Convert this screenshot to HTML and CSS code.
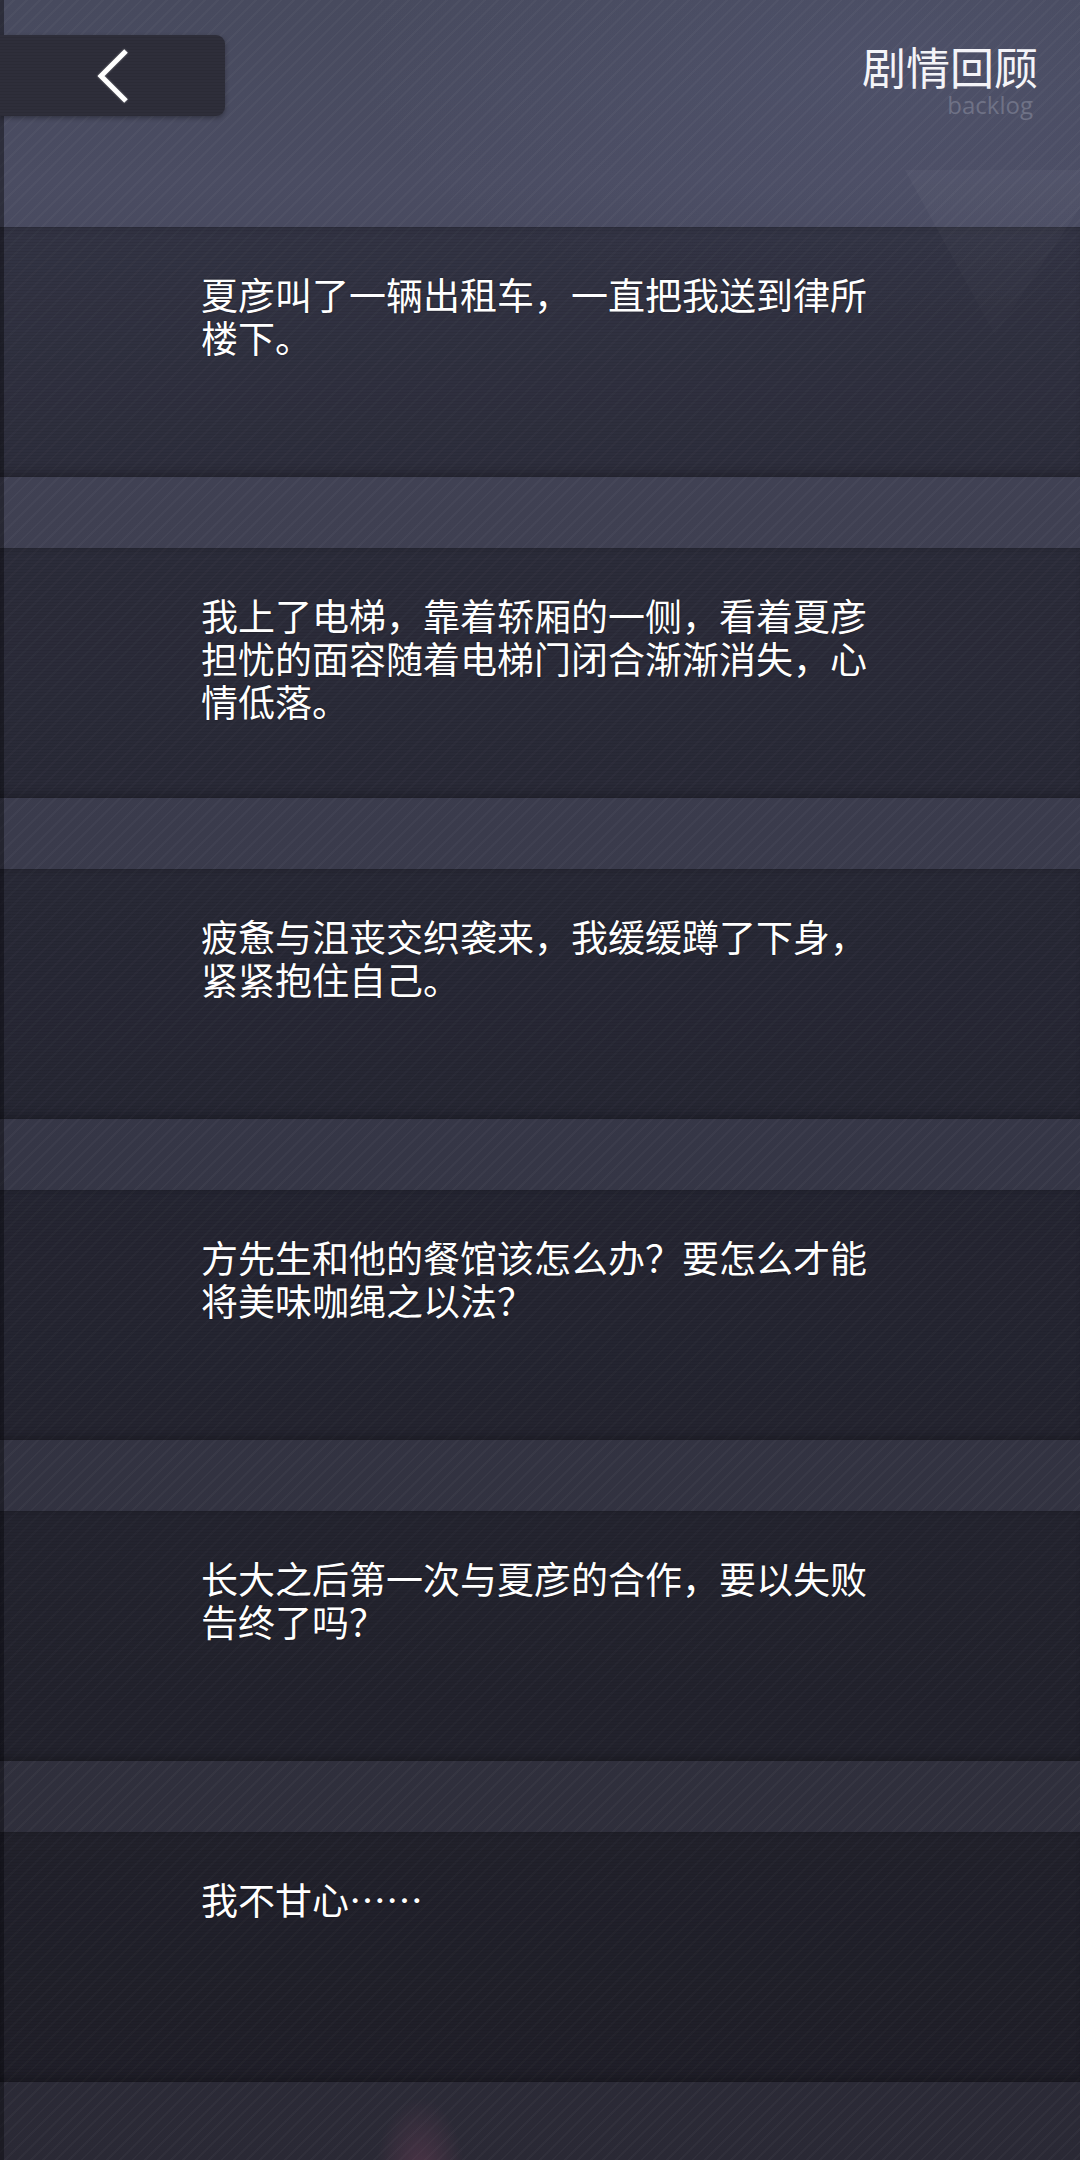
FILE: index.html
```html
<!DOCTYPE html>
<html lang="zh-CN">
<head>
<meta charset="utf-8">
<title>剧情回顾</title>
<link rel="stylesheet" href="styles.css">
</head>
<body>
<div class="screen">
  <div class="shard"></div>
  <div class="glow"></div>

  <header class="topbar">
    <button class="back" aria-label="返回">
      <svg class="back-icon" width="36" height="56" viewBox="0 0 36 56">
        <polyline points="31,3 6,28 31,53" fill="none" stroke="#ffffff" stroke-width="5" stroke-linejoin="miter" stroke-linecap="butt"/>
      </svg>
    </button>
    <div class="title">
      <div class="title-cn">剧情回顾</div>
      <div class="title-en">backlog</div>
    </div>
  </header>

  <main class="log">
    <section class="entry"><p>夏彦叫了一辆出租车，一直把我送到律所楼下。</p></section>
    <section class="entry"><p>我上了电梯，靠着轿厢的一侧，看着夏彦担忧的面容随着电梯门闭合渐渐消失，心情低落。</p></section>
    <section class="entry"><p>疲惫与沮丧交织袭来，我缓缓蹲了下身，紧紧抱住自己。</p></section>
    <section class="entry"><p>方先生和他的餐馆该怎么办？要怎么才能将美味咖绳之以法？</p></section>
    <section class="entry"><p>长大之后第一次与夏彦的合作，要以失败告终了吗？</p></section>
    <section class="entry"><p>我不甘心……</p></section>
  </main>
</div>
</body>
</html>
```

FILE: styles.css
```css
* {
  box-sizing: border-box;
}

html, body {
  margin: 0;
  padding: 0;
}

body {
  width: 1080px;
  min-height: 2160px;
  background: #2a2935;
  font-family: "Noto Sans CJK SC", "Noto Sans", sans-serif;
  color: #ffffff;
}

/* whole screen: vertical fade from slate to near-black, with fine diagonal hatching */
.screen {
  position: relative;
  width: 1080px;
  height: 2160px;
  overflow: hidden;
  background:
    repeating-linear-gradient(135deg, rgba(255, 255, 255, 0.028) 0 2px, rgba(255, 255, 255, 0) 2px 9px),
    radial-gradient(ellipse 520px 260px at 880px 60px, rgba(90, 94, 125, 0.3), rgba(90, 94, 125, 0) 100%),
    linear-gradient(180deg, #474a5e 0px, #4a4c62 180px, #3f4052 510px, #353646 1155px, #2f2f3c 1796px, #2a2935 2160px);
  box-shadow: inset 4px 0 0 rgba(10, 10, 16, 0.45);
}

/* faint inverted triangle in the upper right corner */
.shard {
  position: absolute;
  left: 905px;
  top: 170px;
  width: 200px;
  height: 165px;
  background: linear-gradient(180deg, rgba(255, 255, 255, 0.03), rgba(255, 255, 255, 0.008));
  clip-path: polygon(0 0, 100% 0, 45% 100%);
  pointer-events: none;
}

/* soft pink light at the bottom edge */
.glow {
  position: absolute;
  left: 360px;
  top: 2070px;
  width: 120px;
  height: 180px;
  background: radial-gradient(ellipse 45px 80px at 50% 60%, rgba(130, 70, 100, 0.4), rgba(130, 70, 100, 0) 100%);
  pointer-events: none;
}

.topbar {
  height: 227px;
  display: flex;
  justify-content: space-between;
  align-items: flex-start;
  padding: 35px 42px 0 0;
}

.back {
  width: 225px;
  height: 81px;
  margin: 0;
  padding: 0;
  border: 0;
  border-radius: 0 9px 9px 0;
  background:
    repeating-linear-gradient(0deg, rgba(0, 0, 0, 0.07) 0 1px, rgba(0, 0, 0, 0) 1px 3px),
    #2e2e3a;
  box-shadow: 0 2px 5px rgba(0, 0, 0, 0.3);
  display: flex;
  align-items: center;
  justify-content: center;
}

.back-icon {
  display: block;
  filter: drop-shadow(0 0 1px rgba(255, 255, 255, 0.4));
}

.title {
  margin-top: 9px;
  display: flex;
  flex-direction: column;
  align-items: flex-end;
}

.title-cn {
  font-size: 44px;
  line-height: 44px;
  font-weight: 400;
  color: #f4f4f8;
}

.title-en {
  margin-top: 5px;
  margin-right: 5px;
  font-family: "Open Sans", "Noto Sans", sans-serif;
  font-size: 24px;
  line-height: 24px;
  color: #6f7286;
}

.log {
  display: flex;
  flex-direction: column;
  gap: 71px;
}

.entry {
  height: 250px;
  padding: 46px 0 0 201px;
  background:
    repeating-linear-gradient(0deg, rgba(0, 0, 0, 0.07) 0 1px, rgba(0, 0, 0, 0) 1px 3px),
    rgba(8, 8, 16, 0.34);
  box-shadow:
    inset 0 -10px 12px -8px rgba(0, 0, 0, 0.3),
    inset 0 8px 10px -8px rgba(0, 0, 0, 0.2);
}

.entry p {
  margin: 0;
  width: 680px;
  font-size: 37px;
  line-height: 43px;
  font-weight: 400;
  color: #ffffff;
  text-shadow: 0 0 2px rgba(0, 0, 0, 0.5);
}
```
